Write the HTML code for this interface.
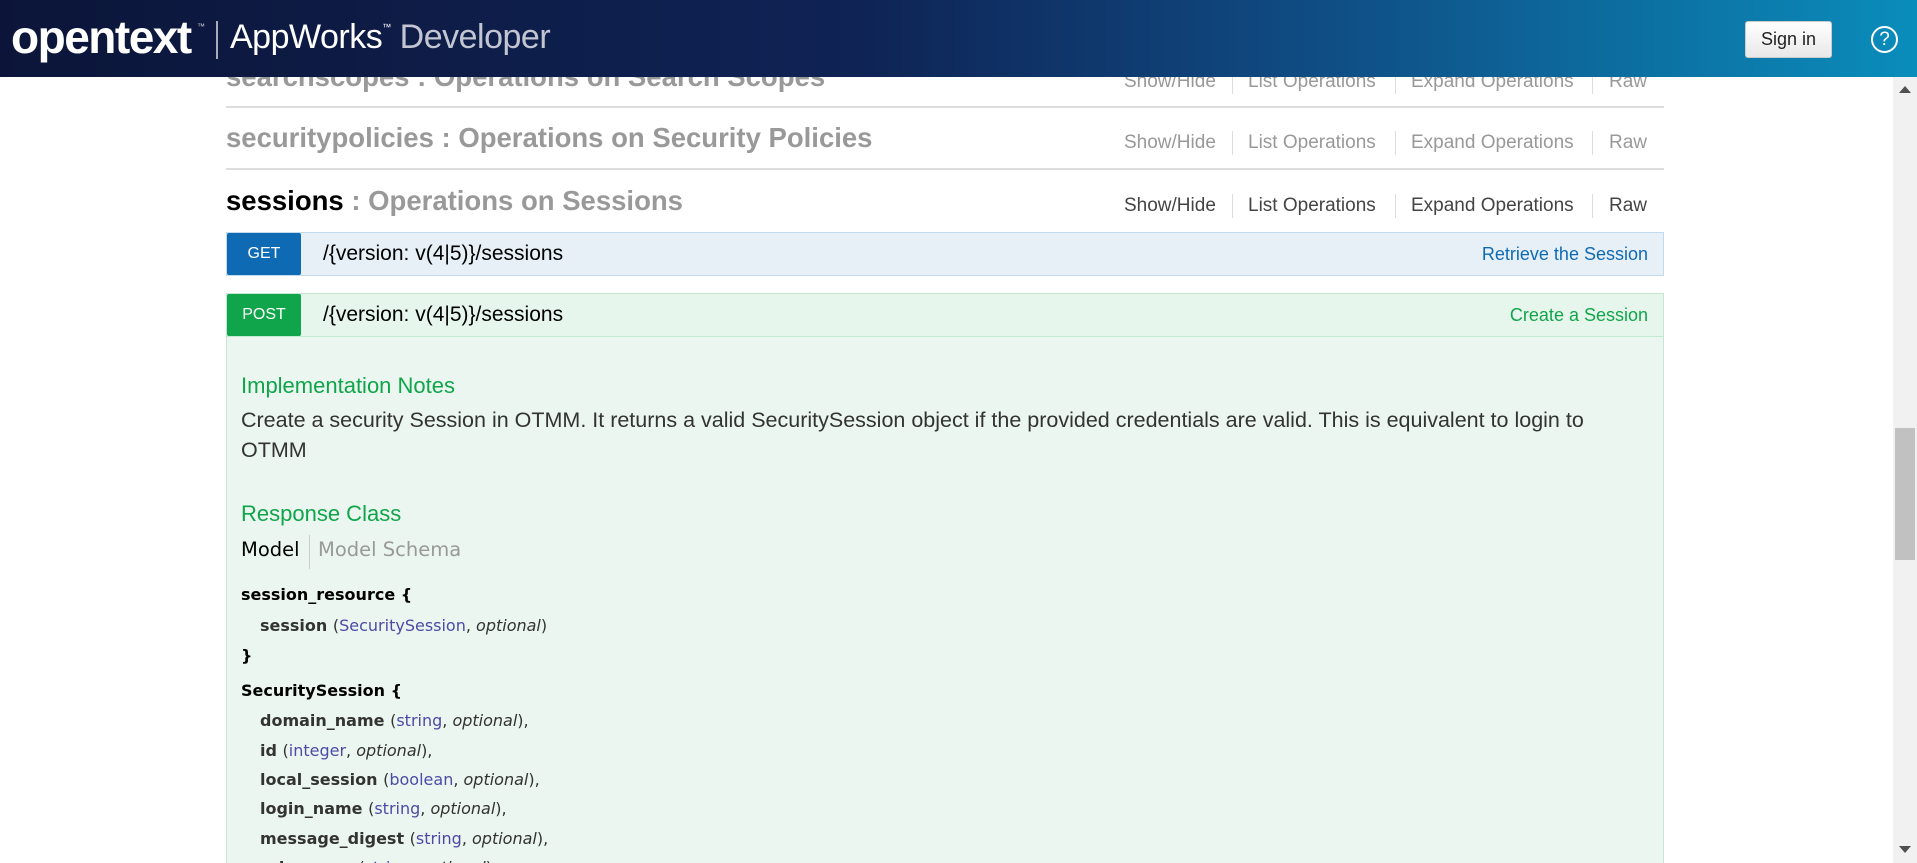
<!DOCTYPE html>
<html><head><meta charset="utf-8"><style>
*{margin:0;padding:0;box-sizing:border-box}
html,body{width:1917px;height:863px;overflow:hidden}
body{background:#fff;font-family:"Liberation Sans",Arial,sans-serif}
#w{position:relative;width:1917px;height:863px;overflow:hidden}
.hdr{position:absolute;left:0;top:0;width:1917px;height:77px;background:linear-gradient(90deg,#0c1539 0%,#0f2355 45%,#0f4f86 70%,#0a8dbb 100%);z-index:5}
.abs{position:absolute;white-space:nowrap}
.h{font-weight:bold;font-size:27.5px;color:#999;line-height:30px}
.line{position:absolute;left:226px;width:1438px;height:2px;background:#ddd}
.lnk{position:absolute;font-size:19px;color:#999;line-height:24px}
.sep{position:absolute;width:1px;height:24px;background:#ddd}
.row{position:absolute;left:226px;width:1438px;height:44px;border:1px solid}
.badge{position:absolute;left:0;top:0;width:74px;height:42px;color:#fff;font-size:16px;text-align:center;line-height:42px;border-radius:2px}
.path{position:absolute;left:96px;top:9px;font-size:21px;color:#000}
.rt{position:absolute;right:15px;top:11px;font-size:18px}
.m{font-family:"DejaVu Sans",sans-serif;font-size:16px;line-height:20px;color:#000}
.ind{left:260px}
.b{font-weight:bold}
.t{color:#4b4ba6;font-weight:normal}
.o{font-style:italic;font-weight:normal;color:#333}
.p{font-weight:normal;color:#333}
#clip{position:absolute;left:0;top:0;width:1893px;height:863px;overflow:hidden}
</style></head><body><div id="w">
<div class="hdr">
  <div class="abs" style="left:11px;top:10px;font-size:46px;font-weight:bold;color:#fff;letter-spacing:-1.5px">opentext</div>
  <div class="abs" style="left:197px;top:22px;font-size:8px;color:#ccc">™</div>
  <div class="abs" style="left:216px;top:21px;width:2px;height:38px;background:#aab"></div>
  <div class="abs" style="left:230px;top:18px;font-size:34px;color:#fff;letter-spacing:-0.5px">AppWorks<span style="font-size:9px;vertical-align:18px">™</span> <span style="color:#c3c6d2">Developer</span></div>
  <div class="abs" style="left:1745px;top:21px;width:87px;height:37px;background:linear-gradient(#fff,#e8e8e8);border:1px solid #ccc;border-radius:3px;font-size:18px;color:#222;text-align:center;line-height:35px">Sign in</div>
  <div class="abs" style="left:1871px;top:26px;width:27px;height:27px;border:2px solid #fff;border-radius:50%;color:#fff;font-size:19px;text-align:center;line-height:23px">?</div>
</div>

<div class="abs" style="left:1893px;top:77px;width:24px;height:786px;background:#f1f1f1"></div>
<div class="abs" style="left:1899px;top:86px;width:0;height:0;border-left:6px solid transparent;border-right:6px solid transparent;border-bottom:7px solid #505050"></div>
<div class="abs" style="left:1895px;top:428px;width:20px;height:132px;background:#c1c1c1"></div>
<div class="abs" style="left:1899px;top:846px;width:0;height:0;border-left:6px solid transparent;border-right:6px solid transparent;border-top:7px solid #505050"></div>

<div id="clip">
<div class="abs h" style="left:226px;top:62px">searchscopes : Operations on Search Scopes</div>
<div class="line" style="top:106px"></div>
<div class="abs h" style="left:226px;top:123px">securitypolicies : Operations on Security Policies</div>
<div class="line" style="top:168px"></div>
<div class="abs h" style="left:226px;top:186px"><span style="color:#000">sessions</span> : Operations on Sessions</div>

<div class="lnk" style="left:1124px;top:70px">Show/Hide</div><div class="sep" style="left:1232px;top:70px"></div>
<div class="lnk" style="left:1248px;top:70px">List Operations</div><div class="sep" style="left:1395px;top:70px"></div>
<div class="lnk" style="left:1411px;top:70px">Expand Operations</div><div class="sep" style="left:1592px;top:70px"></div>
<div class="lnk" style="left:1609px;top:70px">Raw</div>

<div class="lnk" style="left:1124px;top:131px">Show/Hide</div><div class="sep" style="left:1232px;top:131px"></div>
<div class="lnk" style="left:1248px;top:131px">List Operations</div><div class="sep" style="left:1395px;top:131px"></div>
<div class="lnk" style="left:1411px;top:131px">Expand Operations</div><div class="sep" style="left:1592px;top:131px"></div>
<div class="lnk" style="left:1609px;top:131px">Raw</div>

<div class="lnk" style="left:1124px;top:194px;color:#444">Show/Hide</div><div class="sep" style="left:1232px;top:194px"></div>
<div class="lnk" style="left:1248px;top:194px;color:#444">List Operations</div><div class="sep" style="left:1395px;top:194px"></div>
<div class="lnk" style="left:1411px;top:194px;color:#444">Expand Operations</div><div class="sep" style="left:1592px;top:194px"></div>
<div class="lnk" style="left:1609px;top:194px;color:#444">Raw</div>

<div class="row" style="top:232px;background:#e7f0f7;border-color:#c3d9ec">
  <div class="badge" style="background:#0f6ab4">GET</div>
  <div class="path">/{version: v(4|5)}/sessions</div>
  <div class="rt" style="color:#0f6ab4">Retrieve the Session</div>
</div>

<div class="abs" style="left:226px;top:293px;width:1438px;height:570px;background:#ebf6f0;border:1px solid #c3e8d1;border-bottom:none"></div>
<div class="row" style="top:293px;background:#e7f6ec;border-color:#c3e8d1">
  <div class="badge" style="background:#10a54a">POST</div>
  <div class="path">/{version: v(4|5)}/sessions</div>
  <div class="rt" style="color:#10a54a">Create a Session</div>
</div>

<div class="abs" style="left:241px;top:373px;font-size:22px;color:#10a54a">Implementation Notes</div>
<div class="abs" style="left:241px;top:405px;font-size:21.5px;color:#333;line-height:30px;white-space:normal;width:1390px">Create a security Session in OTMM. It returns a valid SecuritySession object if the provided credentials are valid. This is equivalent to login to OTMM</div>
<div class="abs" style="left:241px;top:501px;font-size:22px;color:#10a54a">Response Class</div>
<div class="abs" style="left:241px;top:538px;font-family:'DejaVu Sans',sans-serif;font-size:19.5px;color:#000">Model</div>
<div class="abs" style="left:309px;top:535px;width:1px;height:34px;background:#ccc"></div>
<div class="abs" style="left:318px;top:538px;font-family:'DejaVu Sans',sans-serif;font-size:19.5px;color:#999">Model Schema</div>

<div class="abs m b" style="left:241px;top:585px">session_resource {</div>
<div class="abs m b ind" style="top:616px;color:#333">session <span class="p">(</span><span class="t">SecuritySession</span><span class="p">, </span><span class="o">optional</span><span class="p">)</span></div>
<div class="abs m b" style="left:241px;top:646px">}</div>
<div class="abs m b" style="left:241px;top:681px">SecuritySession {</div>
<div class="abs m b ind" style="top:711px;color:#333">domain_name <span class="p">(</span><span class="t">string</span><span class="p">, </span><span class="o">optional</span><span class="p">),</span></div>
<div class="abs m b ind" style="top:741px;color:#333">id <span class="p">(</span><span class="t">integer</span><span class="p">, </span><span class="o">optional</span><span class="p">),</span></div>
<div class="abs m b ind" style="top:770px;color:#333">local_session <span class="p">(</span><span class="t">boolean</span><span class="p">, </span><span class="o">optional</span><span class="p">),</span></div>
<div class="abs m b ind" style="top:799px;color:#333">login_name <span class="p">(</span><span class="t">string</span><span class="p">, </span><span class="o">optional</span><span class="p">),</span></div>
<div class="abs m b ind" style="top:829px;color:#333">message_digest <span class="p">(</span><span class="t">string</span><span class="p">, </span><span class="o">optional</span><span class="p">),</span></div>
<div class="abs ind" style="top:856px;height:7px;overflow:hidden;width:400px"><div class="m b" style="color:#333;margin-top:2px">role_name <span class="p">(</span><span class="t">string</span><span class="p">, </span><span class="o">optional</span><span class="p">),</span></div></div>
</div>
</div></body></html>
